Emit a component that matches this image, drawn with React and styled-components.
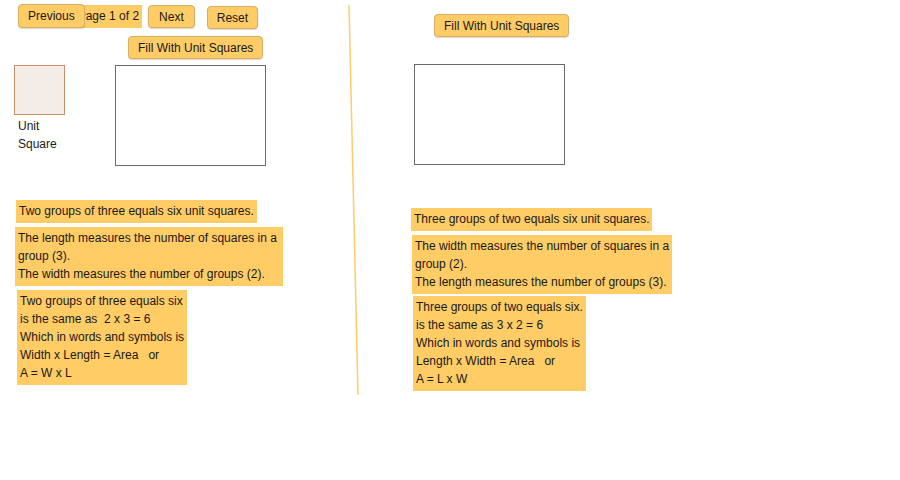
import React from "react";
import styled, { createGlobalStyle } from "styled-components";

const GlobalStyle = createGlobalStyle`
  html, body {
    margin: 0;
    padding: 0;
    background: #ffffff;
  }
  body {
    font-family: "Liberation Sans", Arial, sans-serif;
    font-size: 12px;
    color: #1a1a1a;
  }
`;

const Sheet = styled.div`
  display: flex;
  flex-direction: row;
  width: 900px;
  height: 480px;
  overflow: hidden;
  background: #ffffff;
`;

const Panel = styled.div`
  display: flex;
  flex-direction: column;
  align-items: flex-start;
  width: ${(p) => p.width}px;
  padding-top: ${(p) => p.top || 0}px;
  flex-shrink: 0;
`;

const Toolbar = styled.div`
  display: flex;
  flex-direction: row;
  align-items: flex-start;
  margin-left: 18px;
`;

const Button = styled.button`
  position: relative;
  z-index: 1;
  height: ${(p) => p.h || 24}px;
  padding: 0 ${(p) => p.pad || 9}px;
  margin-left: ${(p) => p.ml || 0}px;
  margin-top: ${(p) => p.mt || 0}px;
  background: #ffcc66;
  border: 1px solid #d6ae66;
  border-radius: 4px;
  box-shadow: 0 1px 1px rgba(120, 90, 30, 0.25);
  font-family: "Liberation Sans", Arial, sans-serif;
  font-size: 12px;
  color: #1a1a1a;
  white-space: nowrap;
  cursor: pointer;
`;

const PageLabel = styled.span`
  display: block;
  height: 23px;
  line-height: 23px;
  margin-top: 1px;
  margin-left: -10px;
  padding: 0 3px 0 3px;
  background: #ffcc66;
  white-space: nowrap;
`;

const ShapeRow = styled.div`
  display: flex;
  flex-direction: row;
  align-items: flex-start;
  margin-top: ${(p) => p.mt}px;
  margin-left: ${(p) => p.ml}px;
`;

const UnitColumn = styled.div`
  display: flex;
  flex-direction: column;
  width: 52px;
`;

const UnitSquare = styled.div`
  width: 51px;
  height: 50px;
  box-sizing: border-box;
  background: #f4ece6;
  border: 1.5px solid #c9906c;
`;

const UnitCaption = styled.div`
  margin-top: 2px;
  margin-left: 4px;
  line-height: 18px;
`;

const Rect = styled.div`
  width: ${(p) => p.w}px;
  height: ${(p) => p.h}px;
  margin-left: ${(p) => p.ml || 0}px;
  margin-top: ${(p) => p.mt || 0}px;
  box-sizing: border-box;
  border: 1.5px solid #6a6a6a;
  background: #ffffff;
`;

const Notes = styled.div`
  display: flex;
  flex-direction: column;
  align-items: flex-start;
  margin-top: ${(p) => p.mt}px;
`;

const Note = styled.div`
  width: ${(p) => p.w}px;
  margin-left: ${(p) => p.ml}px;
  margin-top: ${(p) => p.mt || 0}px;
  padding: 2px 3px 3px;
  box-sizing: border-box;
  background: #ffcc66;
  line-height: 18px;
  white-space: pre;
`;

const Divider = styled.svg`
  display: block;
  flex-shrink: 0;
`;

const Lines = ({ items }) =>
  items.map((t, i) => <div key={i}>{t}</div>);

export default function App() {
  return (
    <>
      <GlobalStyle />
      <Sheet>
        <Panel width={344} top={4}>
          <Toolbar>
            <Button pad={9} h={24}>Previous</Button>
            <PageLabel>Page 1 of 2</PageLabel>
            <Button ml={6} mt={1} h={23} pad={10}>Next</Button>
            <Button ml={12} mt={2} h={23} pad={9}>Reset</Button>
          </Toolbar>
          <Button ml={128} mt={7} h={23} pad={9}>Fill With Unit Squares</Button>
          <ShapeRow ml={14} mt={6}>
            <UnitColumn>
              <UnitSquare />
              <UnitCaption>
                Unit
                <br />
                Square
              </UnitCaption>
            </UnitColumn>
            <Rect w={151} h={101} ml={49} />
          </ShapeRow>
          <Notes mt={34}>
            <Note w={241} ml={16}>
              Two groups of three equals six unit squares.
            </Note>
            <Note w={268} ml={15} mt={4}>
              <Lines
                items={[
                  "The length measures the number of squares in a",
                  "group (3).",
                  "The width measures the number of groups (2).",
                ]}
              />
            </Note>
            <Note w={170} ml={17} mt={4}>
              <Lines
                items={[
                  "Two groups of three equals six",
                  "is the same as  2 x 3 = 6",
                  "Which in words and symbols is",
                  "Width x Length = Area   or",
                  "A = W x L",
                ]}
              />
            </Note>
          </Notes>
        </Panel>

        <Divider width="16" height="400" viewBox="0 0 16 400">
          <line x1="5" y1="5" x2="14" y2="395" stroke="#ffcc66" strokeWidth="1.5" />
        </Divider>

        <Panel width={540} top={14}>
          <Button ml={74} h={23} pad={9}>Fill With Unit Squares</Button>
          <Rect w={151} h={101} ml={54} mt={27} />
          <Notes mt={43}>
            <Note w={241} ml={51}>
              Three groups of two equals six unit squares.
            </Note>
            <Note w={260} ml={52} mt={4}>
              <Lines
                items={[
                  "The width measures the number of squares in a",
                  "group (2).",
                  "The length measures the number of groups (3).",
                ]}
              />
            </Note>
            <Note w={173} ml={53} mt={2}>
              <Lines
                items={[
                  "Three groups of two equals six.",
                  "is the same as 3 x 2 = 6",
                  "Which in words and symbols is",
                  "Length x Width = Area   or",
                  "A = L x W",
                ]}
              />
            </Note>
          </Notes>
        </Panel>
      </Sheet>
    </>
  );
}
